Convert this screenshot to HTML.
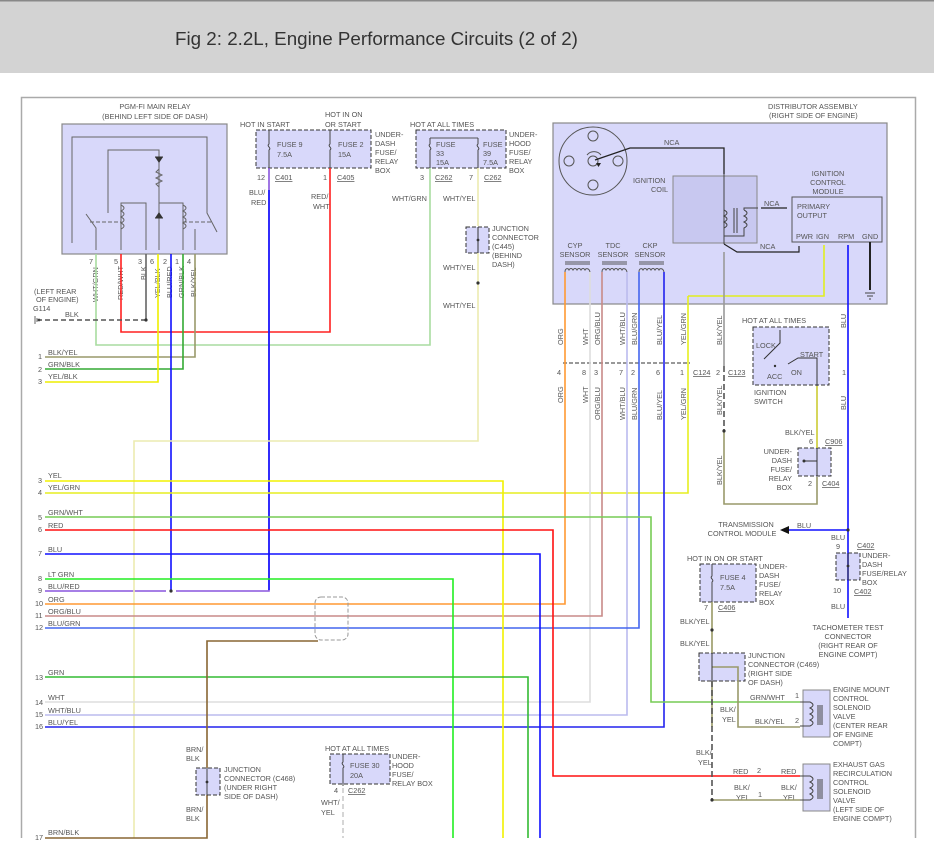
<!DOCTYPE html>
<html><head><meta charset="utf-8"><style>
html,body{margin:0;padding:0;background:#fff;width:934px;height:861px;overflow:hidden}
svg text{font-family:"Liberation Sans",sans-serif;font-size:7.3px;fill:#555}
</style></head><body>
<svg width="934" height="861" viewBox="0 0 934 861" xmlns="http://www.w3.org/2000/svg">
<rect x="0" y="0" width="934" height="73" fill="#d3d3d3"/>
<rect x="0" y="0" width="934" height="1.5" fill="#888"/>
<text x="175" y="45" style="font-size:18.8px;fill:#333">Fig 2: 2.2L, Engine Performance Circuits (2 of 2)</text>
<path d="M21.5 838V97.5H915.5V838" fill="none" stroke="#aaa" stroke-width="1.5"/>

<text x="155" y="109" text-anchor="middle">PGM-FI MAIN RELAY</text>
<text x="155" y="119" text-anchor="middle">(BEHIND LEFT SIDE OF DASH)</text>
<rect x="62" y="124" width="165" height="130" fill="#d8d8fa" stroke="#888" stroke-width="1.2"/>
<g fill="none" stroke="#666" stroke-width="1">
<path d="M96 250V228L86 214M72 243V137H207V213L217 232M108 213V150H159V250M121 250V203H146V250M159 150V232M159 203H183V250M195 229V250"/>
<path d="M159 165v4l-3 3l6 3l-6 3l6 3l-6 3l3 3v4" />
<path d="M90 222H121M183 222H212" stroke-dasharray="4 2"/>
<path d="M121 205c4 2 4 4 0 6c4 2 4 4 0 6c4 2 4 4 0 6c4 2 4 4 0 6M183 205c4 2 4 4 0 6c4 2 4 4 0 6c4 2 4 4 0 6c4 2 4 4 0 6"/>
</g>
<path d="M155 157h8l-4 6zM155 218h8l-4-6z" fill="#333"/>
<path d="M155 218h8M155 157h8" stroke="#333"/>
<g fill="#555" font-size="7"><text x="89" y="264">7</text><text x="114" y="264">5</text><text x="138" y="264">3</text><text x="150" y="264">6</text><text x="163" y="264">2</text><text x="175" y="264">1</text><text x="187" y="264">4</text></g>
<g>
<text transform="translate(98,302) rotate(-90)">WHT/GRN</text>
<text transform="translate(123,300) rotate(-90)">RED/WHT</text>
<text transform="translate(146,280) rotate(-90)">BLK</text>
<text transform="translate(160,298) rotate(-90)">YEL/BLK</text>
<text transform="translate(172,298) rotate(-90)">BLU/RED</text>
<text transform="translate(184,298) rotate(-90)">GRN/BLK</text>
<text transform="translate(196,297) rotate(-90)">BLK/YEL</text>
</g>
<text x="34" y="294">(LEFT REAR</text><text x="36" y="302">OF ENGINE)</text><text x="33" y="311">G114</text><text x="65" y="317">BLK</text>
<path d="M35 316v8M37 318v4" stroke="#666"/>
<circle cx="39" cy="320" r="1.4" fill="#444"/>
<text x="240" y="127">HOT IN START</text><text x="325" y="117">HOT IN ON</text><text x="325" y="127">OR START</text>
<rect x="256" y="130" width="115" height="38" fill="#d8d8fa" stroke="#333" stroke-dasharray="4 2"/>
<text x="277" y="147">FUSE 9</text><text x="277" y="157">7.5A</text><text x="338" y="147">FUSE 2</text><text x="338" y="157">15A</text>
<text x="375" y="137">UNDER-</text><text x="375" y="146">DASH</text><text x="375" y="155">FUSE/</text><text x="375" y="164">RELAY</text><text x="375" y="173">BOX</text>
<text x="257" y="180">12</text><text x="275" y="180" text-decoration="underline">C401</text><text x="323" y="180">1</text><text x="337" y="180" text-decoration="underline">C405</text>
<text x="410" y="127">HOT AT ALL TIMES</text>
<rect x="416" y="130" width="90" height="38" fill="#d8d8fa" stroke="#333" stroke-dasharray="4 2"/>
<path d="M430 138H478" stroke="#555" fill="none"/>
<text x="436" y="147">FUSE</text><text x="436" y="156">33</text><text x="436" y="165">15A</text><text x="483" y="147">FUSE</text><text x="483" y="156">39</text><text x="483" y="165">7.5A</text>
<text x="509" y="137">UNDER-</text><text x="509" y="146">HOOD</text><text x="509" y="155">FUSE/</text><text x="509" y="164">RELAY</text><text x="509" y="173">BOX</text>
<text x="420" y="180">3</text><text x="435" y="180" text-decoration="underline">C262</text><text x="469" y="180">7</text><text x="484" y="180" text-decoration="underline">C262</text>
<g fill="none" stroke="#444"><path d="M269 130v14c-3 2 3 4 0 6v18M330 130v14c-3 2 3 4 0 6v18M430 138v6c-3 2 3 4 0 6v18M478 138v6c-3 2 3 4 0 6v18"/></g>
<text x="249" y="195">BLU/</text><text x="251" y="205">RED</text><text x="311" y="199">RED/</text><text x="313" y="209">WHT</text>
<text x="392" y="201">WHT/GRN</text><text x="443" y="201">WHT/YEL</text>
<rect x="466" y="227" width="23" height="26" fill="#d8d8fa" stroke="#333" stroke-dasharray="4 2"/>
<text x="492" y="231">JUNCTION</text><text x="492" y="240">CONNECTOR</text><text x="492" y="249">(C445)</text><text x="492" y="258">(BEHIND</text><text x="492" y="267">DASH)</text>
<text x="443" y="270">WHT/YEL</text><text x="443" y="308">WHT/YEL</text>

<text x="768" y="109">DISTRIBUTOR ASSEMBLY</text><text x="769" y="118">(RIGHT SIDE OF ENGINE)</text>
<rect x="553" y="123" width="334" height="181" fill="#d8d8fa" stroke="#888" stroke-width="1.2"/>
<g fill="none" stroke="#555"><circle cx="593" cy="161" r="34"/><circle cx="593" cy="136" r="5"/><circle cx="569" cy="161" r="5"/><circle cx="618" cy="161" r="5"/><circle cx="593" cy="185" r="5"/><circle cx="593" cy="161" r="5"/><path d="M587 155a9 9 0 0 1 14 0"/></g>
<path d="M595 160L630 148H724V174" fill="none" stroke="#222" stroke-width="1.3"/>
<path d="M596 163h5l-2.5 4z" fill="#222"/>
<text x="664" y="145">NCA</text>
<rect x="673" y="176" width="84" height="67" fill="#c8c8f0" stroke="#888"/>
<text x="633" y="183">IGNITION</text><text x="651" y="192">COIL</text>
<g fill="none" stroke="#444"><path d="M724 174V244M724 210c4 2 4 4 0 6c4 2 4 4 0 6c4 2 4 4 0 6M734 208v25M737 208v25M744 210c4 2 4 4 0 6c4 2 4 4 0 6c4 2 4 4 0 6v8h-20M744 210v-2h14"/></g>
<rect x="792" y="197" width="90" height="45" fill="#d8d8fa" stroke="#555"/>
<text x="828" y="176" text-anchor="middle">IGNITION</text><text x="828" y="185" text-anchor="middle">CONTROL</text><text x="828" y="194" text-anchor="middle">MODULE</text>
<text x="797" y="209">PRIMARY</text><text x="797" y="218">OUTPUT</text>
<text x="796" y="239">PWR</text><text x="816" y="239">IGN</text><text x="838" y="239">RPM</text><text x="862" y="239">GND</text>
<path d="M761 208H787" stroke="#222" stroke-width="1.2"/><text x="764" y="206">NCA</text>
<path d="M724 244L737 252H799V246" fill="none" stroke="#222" stroke-width="1.2"/><text x="760" y="249">NCA</text>
<path d="M870 242V290" stroke="#222" stroke-width="2"/><path d="M865 293h10M867 296h6M869 299h2" stroke="#444"/>
<text x="575" y="248" text-anchor="middle">CYP</text><text x="575" y="257" text-anchor="middle">SENSOR</text>
<text x="613" y="248" text-anchor="middle">TDC</text><text x="613" y="257" text-anchor="middle">SENSOR</text>
<text x="650" y="248" text-anchor="middle">CKP</text><text x="650" y="257" text-anchor="middle">SENSOR</text>
<g fill="none" stroke="#555"><path d="M565 262h25M565 264h25M602 262h25M602 264h25M639 262h25M639 264h25"/>
<path d="M565 272c0-4 3-4 4-2c1-2 3-2 4 0c1-2 3-2 4 0c1-2 3-2 4 0c1-2 3-2 4 0c1-2 4-2 5 2M602 272c0-4 3-4 4-2c1-2 3-2 4 0c1-2 3-2 4 0c1-2 3-2 4 0c1-2 3-2 4 0c1-2 4-2 5 2M639 272c0-4 3-4 4-2c1-2 3-2 4 0c1-2 3-2 4 0c1-2 3-2 4 0c1-2 3-2 4 0c1-2 4-2 5 2"/></g>

<text x="742" y="323">HOT AT ALL TIMES</text>
<rect x="753" y="327" width="76" height="58" fill="#d8d8fa" stroke="#333" stroke-dasharray="4 2"/>
<path d="M780 330V343L764 359M788 364L798 358H817V386" fill="none" stroke="#333"/>
<circle cx="775" cy="366" r="1.2" fill="#333"/>
<text x="756" y="348">LOCK</text><text x="800" y="357">START</text><text x="767" y="379">ACC</text><text x="791" y="375">ON</text>
<text x="754" y="395">IGNITION</text><text x="754" y="404">SWITCH</text>

<g>
<text transform="translate(563,345) rotate(-90)">ORG</text>
<text transform="translate(588,345) rotate(-90)">WHT</text>
<text transform="translate(600,345) rotate(-90)">ORG/BLU</text>
<text transform="translate(625,345) rotate(-90)">WHT/BLU</text>
<text transform="translate(637,345) rotate(-90)">BLU/GRN</text>
<text transform="translate(662,345) rotate(-90)">BLU/YEL</text>
<text transform="translate(686,345) rotate(-90)">YEL/GRN</text>
<text transform="translate(722,345) rotate(-90)">BLK/YEL</text>
<text transform="translate(846,328) rotate(-90)">BLU</text>
<text transform="translate(563,403) rotate(-90)">ORG</text>
<text transform="translate(588,403) rotate(-90)">WHT</text>
<text transform="translate(600,420) rotate(-90)">ORG/BLU</text>
<text transform="translate(625,420) rotate(-90)">WHT/BLU</text>
<text transform="translate(637,420) rotate(-90)">BLU/GRN</text>
<text transform="translate(662,420) rotate(-90)">BLU/YEL</text>
<text transform="translate(686,420) rotate(-90)">YEL/GRN</text>
<text transform="translate(722,415) rotate(-90)">BLK/YEL</text>
<text transform="translate(846,410) rotate(-90)">BLU</text>
<text transform="translate(722,485) rotate(-90)">BLK/YEL</text>
</g>
<path d="M563 363H690" stroke="#333" stroke-dasharray="4 2"/>
<g font-size="7"><text x="557" y="375">4</text><text x="582" y="375">8</text><text x="594" y="375">3</text><text x="619" y="375">7</text><text x="631" y="375">2</text><text x="656" y="375">6</text><text x="680" y="375">1</text><text x="716" y="375">2</text><text x="842" y="375">1</text></g>
<text x="693" y="375" text-decoration="underline">C124</text><text x="728" y="375" text-decoration="underline">C123</text>

<text x="785" y="435">BLK/YEL</text><text x="809" y="444">6</text><text x="825" y="444" text-decoration="underline">C906</text>
<rect x="798" y="448" width="33" height="28" fill="#d8d8fa" stroke="#333" stroke-dasharray="4 2"/>
<path d="M817 448V476M817 461H804" stroke="#333"/><circle cx="804" cy="461" r="1.5" fill="#333"/>
<g text-anchor="end"><text x="792" y="454">UNDER-</text><text x="792" y="463">DASH</text><text x="792" y="472">FUSE/</text><text x="792" y="481">RELAY</text><text x="792" y="490">BOX</text></g>
<text x="808" y="486">2</text><text x="822" y="486" text-decoration="underline">C404</text>

<text x="746" y="527" text-anchor="middle">TRANSMISSION</text><text x="742" y="536" text-anchor="middle">CONTROL MODULE</text>
<text x="797" y="528">BLU</text>
<path d="M780 530l9-4v8z" fill="#111"/>
<text x="831" y="540">BLU</text><text x="836" y="549">9</text><text x="857" y="548" text-decoration="underline">C402</text>
<rect x="836" y="553" width="24" height="27" fill="#d8d8fa" stroke="#333" stroke-dasharray="4 2"/>
<text x="862" y="558">UNDER-</text><text x="862" y="567">DASH</text><text x="862" y="576">FUSE/RELAY</text><text x="862" y="585">BOX</text>
<text x="833" y="593">10</text><text x="854" y="594" text-decoration="underline">C402</text><text x="831" y="609">BLU</text>
<g text-anchor="middle"><text x="848" y="630">TACHOMETER TEST</text><text x="848" y="639">CONNECTOR</text><text x="848" y="648">(RIGHT REAR OF</text><text x="848" y="657">ENGINE COMPT)</text></g>

<text x="687" y="561">HOT IN ON OR START</text>
<rect x="700" y="564" width="56" height="38" fill="#d8d8fa" stroke="#333" stroke-dasharray="4 2"/>
<path d="M712 564v12c-3 2 3 4 0 6v24" fill="none" stroke="#444"/>
<text x="720" y="580">FUSE 4</text><text x="720" y="590">7.5A</text>
<text x="759" y="569">UNDER-</text><text x="759" y="578">DASH</text><text x="759" y="587">FUSE/</text><text x="759" y="596">RELAY</text><text x="759" y="605">BOX</text>
<text x="704" y="610">7</text><text x="718" y="610" text-decoration="underline">C406</text>
<text x="680" y="624">BLK/YEL</text><text x="680" y="646">BLK/YEL</text>
<rect x="699" y="653" width="46" height="28" fill="#d8d8fa" stroke="#333" stroke-dasharray="4 2"/>
<text x="748" y="658">JUNCTION</text><text x="748" y="667">CONNECTOR (C469)</text><text x="748" y="676">(RIGHT SIDE</text><text x="748" y="685">OF DASH)</text>
<text x="750" y="700">GRN/WHT</text><text x="720" y="712">BLK/</text><text x="722" y="722">YEL</text><text x="755" y="724">BLK/YEL</text>
<text x="795" y="698" font-size="7">1</text><text x="795" y="723" font-size="7">2</text>
<rect x="803" y="690" width="27" height="47" fill="#d8d8fa" stroke="#888"/>
<path d="M800 702h10c4 2 4 4 0 6c4 2 4 4 0 6c4 2 4 4 0 6c4 2 4 4 0 6h-10M818 705v20M820 705v20M822 705v20" fill="none" stroke="#444"/>
<text x="833" y="692">ENGINE MOUNT</text><text x="833" y="701">CONTROL</text><text x="833" y="710">SOLENOID</text><text x="833" y="719">VALVE</text><text x="833" y="728">(CENTER REAR</text><text x="833" y="737">OF ENGINE</text><text x="833" y="746">COMPT)</text>
<text x="696" y="755">BLK/</text><text x="698" y="765">YEL</text>
<text x="733" y="774">RED</text><text x="757" y="773" font-size="7">2</text><text x="781" y="774">RED</text>
<text x="734" y="790">BLK/</text><text x="736" y="800">YEL</text><text x="758" y="797" font-size="7">1</text><text x="781" y="790">BLK/</text><text x="783" y="800">YEL</text>
<rect x="803" y="764" width="27" height="47" fill="#d8d8fa" stroke="#888"/>
<path d="M800 776h10c4 2 4 4 0 6c4 2 4 4 0 6c4 2 4 4 0 6c4 2 4 4 0 6h-10M818 779v20M820 779v20M822 779v20" fill="none" stroke="#444"/>
<text x="833" y="767">EXHAUST GAS</text><text x="833" y="776">RECIRCULATION</text><text x="833" y="785">CONTROL</text><text x="833" y="794">SOLENOID</text><text x="833" y="803">VALVE</text><text x="833" y="812">(LEFT SIDE OF</text><text x="833" y="821">ENGINE COMPT)</text>

<g fill="none" stroke-width="1.6">
<path d="M96 254V345H430V168" stroke="#a8dca0"/>
<path d="M121 254V332H330V168" stroke="#ff2020"/>
<path d="M146 254V320" stroke="#666"/>
<path d="M146 320H40" stroke="#555" stroke-dasharray="5 3"/>
<path d="M195 254V357H45" stroke="#99996a"/>
<path d="M183 254V369H45" stroke="#33aa33"/>
<path d="M158 254V382H45" stroke="#eeee00"/>
<path d="M171 254V591" stroke="#1010ff"/>
<path d="M269 168V591H176M166 591H45" stroke="#8855dd"/>
<path d="M269 190V590" stroke="#1010ff"/>
<path d="M478 168V226M478 253V441H134V838" stroke="#ecebb0"/>
<path d="M688 296V493H45" stroke="#e6ee20"/>
<path d="M824 245V296H688" stroke="#e0ee20"/>
<path d="M848 245V618" stroke="#1010ff"/>
<path d="M848 530H789" stroke="#1010ff"/>
<path d="M724 252V366" stroke="#999"/>
<path d="M724 366V431" stroke="#555" stroke-dasharray="6 3"/>
<path d="M724 431V504H817V477" stroke="#99996a"/>
<path d="M817 386V448" stroke="#cccc33"/>
<path d="M565 272V604H45" stroke="#ff9933"/>
<path d="M590 272V702H45" stroke="#dddddd"/>
<path d="M602 272V616H45" stroke="#c88a88"/>
<path d="M627 272V715H45" stroke="#bbbbee"/>
<path d="M639 272V628H45" stroke="#4466ee"/>
<path d="M664 272V727H45" stroke="#2222ee"/>
<path d="M45 481H503V838" stroke="#f2f200"/>
<path d="M45 517H651V702H800" stroke="#77cc55"/>
<path d="M45 530H553V776H800" stroke="#ff1010"/>
<path d="M45 554H540V838" stroke="#1010ff"/>
<path d="M45 579H453V838" stroke="#22ee22"/>
<path d="M45 677H528V838" stroke="#33bb33"/>
<path d="M318 641H207V838H45" stroke="#886633"/>
<path d="M712 602V653M712 681V727" stroke="#999966"/>
<path d="M712 681V800" stroke="#555" stroke-dasharray="6 3"/>
<path d="M712 667H738V727H800M712 800H800" stroke="#99996a"/>
<path d="M343 788V838" stroke="#ccc" stroke-dasharray="5 3"/>
</g>
<circle cx="146" cy="320" r="1.6" fill="#333"/><circle cx="171" cy="591" r="1.6" fill="#333"/><circle cx="478" cy="283" r="1.6" fill="#333"/><circle cx="724" cy="431" r="1.6" fill="#333"/><circle cx="848" cy="530" r="1.6" fill="#333"/><circle cx="712" cy="630" r="1.6" fill="#333"/><circle cx="712" cy="800" r="1.6" fill="#333"/><circle cx="478" cy="240" r="1.4" fill="#333"/><circle cx="848" cy="566" r="1.4" fill="#333"/>
<path d="M478 227V253M848 553V580M712 653V681" stroke="#333"/>
<rect x="315" y="597" width="33" height="43" rx="6" fill="none" stroke="#999" stroke-dasharray="4 2"/>
<g font-size="7"><text x="38" y="359">1</text><text x="38" y="372">2</text><text x="38" y="384">3</text><text x="38" y="483">3</text><text x="38" y="495">4</text><text x="38" y="520">5</text><text x="38" y="532">6</text><text x="38" y="556">7</text><text x="38" y="581">8</text><text x="38" y="593">9</text><text x="35" y="606">10</text><text x="35" y="618">11</text><text x="35" y="630">12</text><text x="35" y="680">13</text><text x="35" y="705">14</text><text x="35" y="717">15</text><text x="35" y="729">16</text><text x="35" y="840">17</text></g>
<text x="48" y="355">BLK/YEL</text><text x="48" y="367">GRN/BLK</text><text x="48" y="379">YEL/BLK</text>
<text x="48" y="478">YEL</text><text x="48" y="490">YEL/GRN</text><text x="48" y="515">GRN/WHT</text><text x="48" y="528">RED</text><text x="48" y="552">BLU</text><text x="48" y="577">LT GRN</text><text x="48" y="589">BLU/RED</text><text x="48" y="602">ORG</text><text x="48" y="614">ORG/BLU</text><text x="48" y="626">BLU/GRN</text><text x="48" y="675">GRN</text><text x="48" y="700">WHT</text><text x="48" y="713">WHT/BLU</text><text x="48" y="725">BLU/YEL</text><text x="48" y="835">BRN/BLK</text>
<text x="186" y="752">BRN/</text><text x="186" y="761">BLK</text>
<rect x="196" y="768" width="24" height="27" fill="#d8d8fa" stroke="#333" stroke-dasharray="4 2"/>
<path d="M207 768V795" stroke="#444"/><circle cx="207" cy="782" r="1.4" fill="#333"/>
<text x="224" y="772">JUNCTION</text><text x="224" y="781">CONNECTOR (C468)</text><text x="224" y="790">(UNDER RIGHT</text><text x="224" y="799">SIDE OF DASH)</text>
<text x="186" y="812">BRN/</text><text x="186" y="821">BLK</text>
<text x="325" y="751">HOT AT ALL TIMES</text>
<rect x="330" y="754" width="60" height="30" fill="#d8d8fa" stroke="#333" stroke-dasharray="4 2"/>
<path d="M343 754v8c-3 2 3 4 0 6v18" fill="none" stroke="#444"/>
<text x="350" y="768">FUSE 30</text><text x="350" y="778">20A</text>
<text x="392" y="759">UNDER-</text><text x="392" y="768">HOOD</text><text x="392" y="777">FUSE/</text><text x="392" y="786">RELAY BOX</text>
<text x="334" y="793">4</text><text x="348" y="793" text-decoration="underline">C262</text>
<text x="321" y="805">WHT/</text><text x="321" y="815">YEL</text>
</svg>
</body></html>
